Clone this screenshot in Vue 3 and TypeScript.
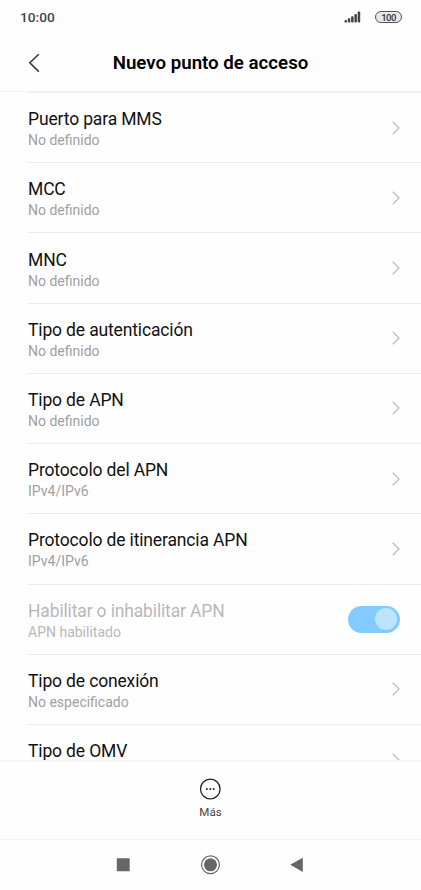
<template>
  <div class="screen">
    <div class="status-bar">
      <span class="clock">10:00</span>
      <div class="status-icons">
        <svg class="signal" width="17" height="12" viewBox="0 0 17 12">
          <rect
            v-for="(height, i) in signalBars"
            :key="i"
            :x="0.5 + i * 3.3"
            :y="11.5 - height"
            width="2.5"
            :height="height"
            rx="0.8"
          />
        </svg>
        <span class="battery">100</span>
      </div>
    </div>

    <header class="header">
      <button class="back" aria-label="Atrás">
        <svg width="12" height="20" viewBox="0 0 12 20">
          <path d="M10.8 1.2 L1.8 9.8 L10.8 18.6" />
        </svg>
      </button>
      <h1>Nuevo punto de acceso</h1>
    </header>

    <main class="settings">
      <div
        v-for="item in settings"
        :key="item.title"
        class="row"
        :class="{ disabled: item.toggle }"
      >
        <div class="labels">
          <p class="title">{{ item.title }}</p>
          <p v-if="item.value" class="value">{{ item.value }}</p>
        </div>
        <span v-if="item.toggle" class="switch"><span class="knob"></span></span>
        <svg v-else class="chevron" width="8" height="14" viewBox="0 0 8 14">
          <path d="M0.8 0.7 L7 7 L0.8 13.3" />
        </svg>
      </div>
    </main>

    <footer class="actions">
      <button class="more">
        <svg width="22" height="22" viewBox="0 0 22 22">
          <circle class="ring" cx="11.3" cy="11" r="9.8" />
          <circle cx="7.9" cy="11" r="1" />
          <circle cx="11.3" cy="11" r="1" />
          <circle cx="14.7" cy="11" r="1" />
        </svg>
        <span>Más</span>
      </button>
    </footer>

    <nav class="nav-bar">
      <svg width="20" height="20" viewBox="0 0 20 20">
        <rect x="3.8" y="3.3" width="12.9" height="12.9" rx="0.5" />
      </svg>
      <svg width="20" height="20" viewBox="0 0 20 20">
        <circle class="ring" cx="10.5" cy="9.8" r="8.9" />
        <circle cx="10.5" cy="9.8" r="6.5" />
      </svg>
      <svg width="20" height="20" viewBox="0 0 20 20">
        <path d="M15.8 2.8 V16.9 L3.3 9.8 Z" />
      </svg>
    </nav>
  </div>
</template>

<script setup lang="ts">
import { ref } from 'vue';

interface Setting {
  title: string;
  value?: string;
  toggle?: boolean;
}

const signalBars = [2.4, 4.2, 6.2, 8.4, 11];

const settings = ref<Setting[]>([
  { title: 'Puerto para MMS', value: 'No definido' },
  { title: 'MCC', value: 'No definido' },
  { title: 'MNC', value: 'No definido' },
  { title: 'Tipo de autenticación', value: 'No definido' },
  { title: 'Tipo de APN', value: 'No definido' },
  { title: 'Protocolo del APN', value: 'IPv4/IPv6' },
  { title: 'Protocolo de itinerancia APN', value: 'IPv4/IPv6' },
  { title: 'Habilitar o inhabilitar APN', value: 'APN habilitado', toggle: true },
  { title: 'Tipo de conexión', value: 'No especificado' },
  { title: 'Tipo de OMV' },
]);
</script>

<style>
body {
  background: #fefefe;
}
</style>

<style scoped>
.screen {
  display: flex;
  flex-direction: column;
  height: 890px;
  overflow: hidden;
  background: #fefefe;
  color: #111;
  font-family: Roboto, "Noto Sans", sans-serif;
}

h1,
p {
  margin: 0;
}

button {
  padding: 0;
  border: none;
  background: none;
  color: inherit;
  font-family: inherit;
}

.status-bar {
  display: flex;
  align-items: center;
  justify-content: space-between;
  flex: none;
  height: 34px;
  padding: 0 19px 0 20px;
}

.clock {
  color: #444;
  font-size: 13.7px;
  font-weight: 500;
}

.status-icons {
  display: flex;
  align-items: center;
  gap: 14px;
}

.signal {
  fill: #444;
}

.battery {
  box-sizing: border-box;
  width: 27px;
  height: 12px;
  border: 1px solid #555;
  border-radius: 6px;
  background: #e8e8e8;
  color: #333;
  font-size: 9.5px;
  font-weight: 500;
  line-height: 11px;
  letter-spacing: -0.5px;
  text-align: center;
}

.header {
  display: grid;
  grid-template-columns: 40px 1fr 40px;
  align-items: center;
  box-sizing: border-box;
  flex: none;
  height: 58px;
  padding: 0 14px;
  border-bottom: 1px solid #f3f3f3;
}

.back {
  display: flex;
  justify-content: center;
}

.back path {
  fill: none;
  stroke: #333;
  stroke-width: 1.5;
}

.header h1 {
  color: #000;
  font-size: 18.7px;
  font-weight: 600;
  line-height: 24px;
  text-align: center;
}

.settings {
  flex: 1;
  min-height: 0;
  overflow: hidden;
}

.row {
  display: flex;
  align-items: center;
  justify-content: space-between;
  box-sizing: border-box;
  height: 70.23px;
  margin-left: 28px;
  padding-right: 21px;
  border-top: 1px solid #ececec;
}

.labels {
  box-sizing: border-box;
  height: 45px;
  padding-top: 3px;
}

.title {
  font-size: 17.5px;
  line-height: 22px;
  letter-spacing: -0.15px;
}

.value {
  color: #a0a0a0;
  font-size: 14px;
  line-height: 20px;
}

.disabled .title,
.disabled .value {
  color: #b8b8b8;
}

.chevron path {
  fill: none;
  stroke: #bdbdbd;
  stroke-width: 1.3;
}

.switch {
  display: flex;
  align-items: center;
  justify-content: flex-end;
  box-sizing: border-box;
  width: 52px;
  height: 27px;
  padding: 0 3px;
  border-radius: 14px;
  background: #82caff;
}

.knob {
  width: 22px;
  height: 22px;
  border-radius: 50%;
  background: #bce4ff;
}

.actions {
  display: flex;
  justify-content: center;
  box-sizing: border-box;
  flex: none;
  height: 79px;
  padding-top: 16px;
  border-top: 2px solid #f5f5f5;
}

.more {
  display: flex;
  flex-direction: column;
  align-items: center;
  gap: 5px;
  height: 42px;
  color: #444;
  font-size: 11.6px;
  line-height: 14px;
}

.more svg {
  fill: #222;
}

.more .ring {
  fill: none;
  stroke: #222;
  stroke-width: 1.3;
}

.nav-bar {
  display: flex;
  align-items: center;
  justify-content: space-between;
  box-sizing: border-box;
  flex: none;
  height: 51px;
  padding: 0 114px 0 113px;
  border-top: 1px solid #f2f2f2;
}

.nav-bar svg {
  fill: #666;
}

.nav-bar .ring {
  fill: none;
  stroke: #666;
  stroke-width: 1.2;
}
</style>
